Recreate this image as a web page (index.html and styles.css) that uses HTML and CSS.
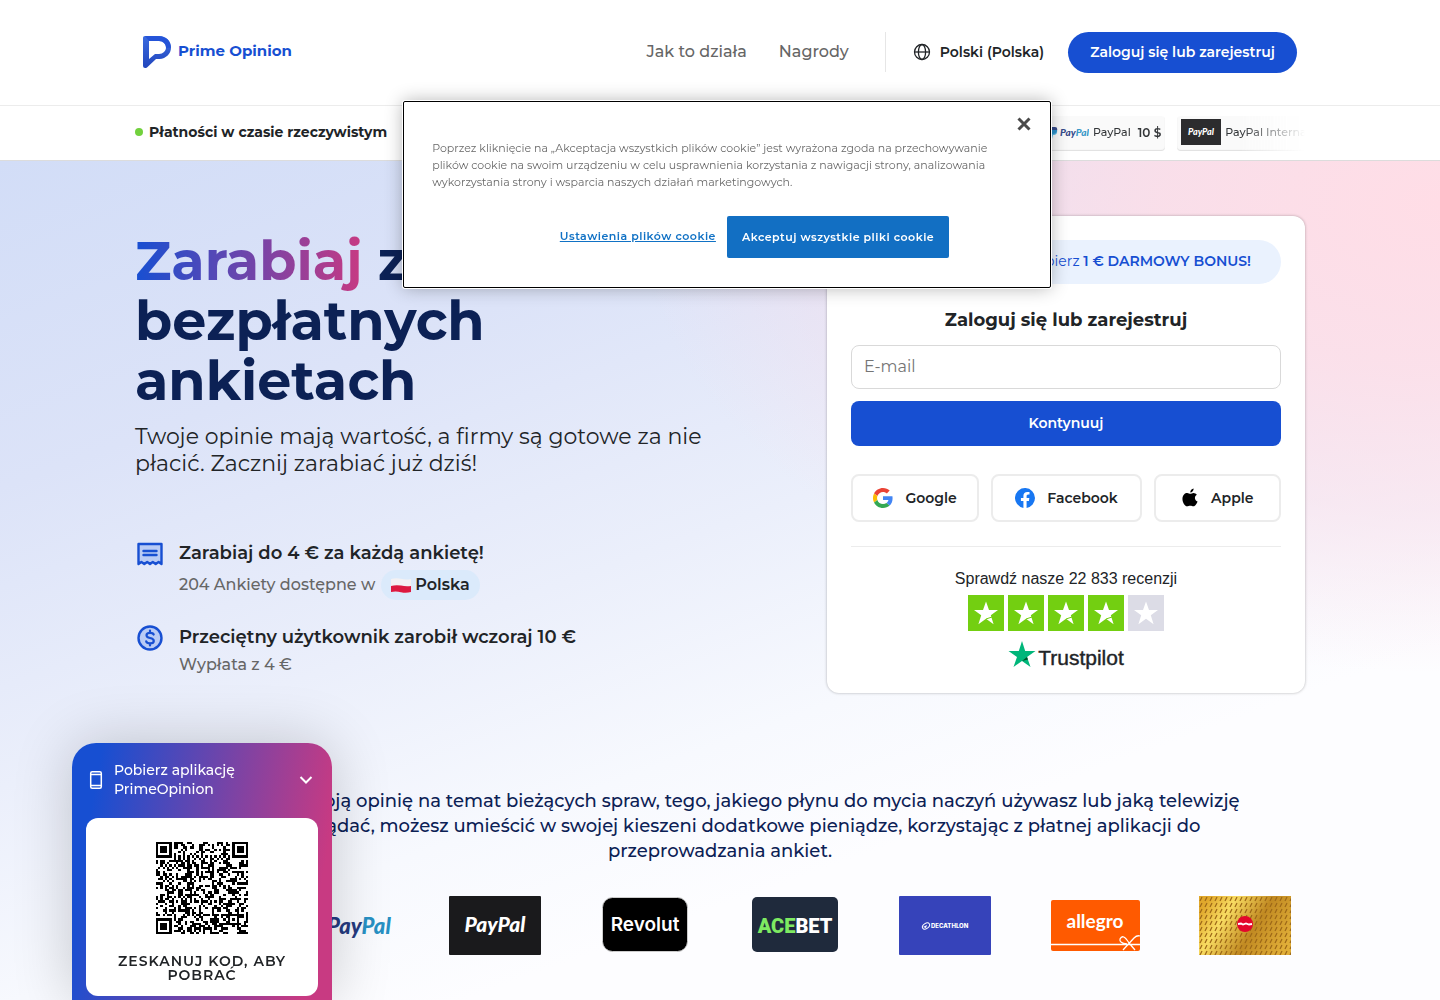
FILE: index.html
```html
<!DOCTYPE html>
<html lang="pl">
<head>
<meta charset="utf-8">
<meta name="viewport" content="width=device-width, initial-scale=1">
<title>Prime Opinion</title>
<link rel="stylesheet" href="styles.css">
</head>
<body>
<header class="site-header">
  <div class="container header-row">
    <a class="brand" href="#">
      <svg width="28" height="34" viewBox="0 0 28 34" aria-hidden="true">
        <defs><linearGradient id="brandFill" x1="0" y1="0" x2="0" y2="1"><stop offset="0" stop-color="#3a6be0"/><stop offset="1" stop-color="#2246bd"/></linearGradient></defs>
        <path d="M2 1H16C23 1 28 6 28 12.500C28 19 23 23.500 16.500 24H13L4 32.400C2 33.600 0 33 0 30.500V3C0 1.800.8 1 2 1Z" fill="url(#brandFill)"/>
        <path d="M6 6H16C20 6 23 9 23 12.500C23 16 20 19 16 19H12L6 24Z" fill="#fff"/>
        <path d="M2 1H16C23 1 28 6 28 12.500L23 13C23 9 20 6 16 6H6Z" fill="#1d4bd6" opacity=".7"/>
      </svg>
      <span>Prime Opinion</span>
    </a>
    <nav class="main-nav">
      <a href="#">Jak to działa</a>
      <a href="#">Nagrody</a>
    </nav>
    <button class="language" type="button">
      <svg width="18" height="18" viewBox="0 0 18 18" fill="none" stroke="currentColor" stroke-width="1.300" aria-hidden="true"><circle cx="9" cy="9" r="7.500"/><ellipse cx="9" cy="9" rx="3.600" ry="7.500"/><path d="M1.500 9H16.500"/></svg>
      <span>Polski (Polska)</span>
    </button>
    <button class="login" type="button">Zaloguj się lub zarejestruj</button>
  </div>
</header>

<section class="ticker">
  <div class="container ticker-row">
    <p class="ticker-label">Płatności w czasie rzeczywistym</p>
    <ul class="payouts">
      <li>
        <svg width="40" height="26" viewBox="0 0 40 26" aria-hidden="true"><path d="M1 8H6Q9 8 8 12Q7 15 3 15L2 18H-1Z" fill="#253b80"/><path d="M3 11H8Q9 16 4 16L3 20H0Z" fill="#179bd7" opacity=".8"/><text class="pp-text" x="11" y="17" font-size="10"><tspan fill="#253b80">Pay</tspan><tspan fill="#2790c3">Pal</tspan></text></svg>
        <span>PayPal</span><strong>10 $</strong>
      </li>
      <li>
        <svg width="40" height="26" viewBox="0 0 40 26" aria-hidden="true"><rect width="40" height="26" fill="#1a1a1c"/><text class="pp-text" x="20" y="16" font-size="9" text-anchor="middle" fill="#fff">PayPal</text></svg>
        <span>PayPal International</span><strong>10 $</strong>
      </li>
    </ul>
  </div>
</section>

<main class="page">
  <div class="container hero">
    <div class="pitch">
      <h1><span class="accent">Zarabiaj</span> z bezpłatnych ankietach</h1>
      <p class="lead">Twoje opinie mają wartość, a firmy są gotowe za nie płacić. Zacznij zarabiać już dziś!</p>
      <ul class="benefits">
        <li>
          <svg width="30" height="30" viewBox="0 0 30 30" aria-hidden="true"><path d="M3.500 6H26.500V26L23.600 24L20.700 26L17.800 24L15 26L12.200 24L9.300 26L6.400 24L3.500 26Z" fill="#b9cbf5" stroke="#174fd2" stroke-width="2.400" stroke-linejoin="round"/><path d="M8.500 13H21.500M8.500 17H21.500" stroke="#174fd2" stroke-width="2.400" stroke-linecap="round"/></svg>
          <div>
            <h2>Zarabiaj do 4 € za każdą ankietę!</h2>
            <p class="available">204 Ankiety dostępne w <span class="country"><svg width="20" height="15" viewBox="0 0 20 15" aria-hidden="true"><path d="M0 1Q5 -.5 10 .8T20 1V14Q15 15.500 10 14.200T0 14Z" fill="#f3f1f3"/><path d="M0 8Q5 6.500 10 7.600T20 8V14Q15 15.500 10 14.200T0 14Z" fill="#dc1940"/></svg>Polska</span></p>
          </div>
        </li>
        <li>
          <svg width="30" height="30" viewBox="0 0 30 30" aria-hidden="true"><circle cx="15" cy="16" r="11.500" fill="#b9cbf5" stroke="#174fd2" stroke-width="2.400"/><path d="M18.700 12.500Q18 10.800 15 10.800Q11.500 10.800 11.500 13.300Q11.500 15.400 15 16Q18.800 16.600 18.800 19Q18.800 21.400 15 21.400Q11.800 21.400 11.200 19.400M15 8.500V10.800M15 21.400V23.500" fill="none" stroke="#174fd2" stroke-width="2.200" stroke-linecap="round"/></svg>
          <div>
            <h2>Przeciętny użytkownik zarobił wczoraj 10 €</h2>
            <p>Wypłata z 4 €</p>
          </div>
        </li>
      </ul>
    </div>

    <form class="signup">
      <p class="bonus">Zarejestruj się i odbierz <b>1 € DARMOWY BONUS!</b></p>
      <h2><label for="email">Zaloguj się lub zarejestruj</label></h2>
      <input id="email" type="email" placeholder="E-mail">
      <button class="continue" type="button">Kontynuuj</button>
      <div class="providers">
        <button type="button"><svg width="20" height="20" viewBox="0 0 48 48" aria-hidden="true"><path fill="#EA4335" d="M24 9.500c3.540 0 6.710 1.220 9.210 3.600l6.850-6.850C35.900 2.380 30.470 0 24 0 14.620 0 6.510 5.380 2.560 13.220l7.980 6.190C12.430 13.720 17.740 9.500 24 9.500z"/><path fill="#4285F4" d="M46.980 24.550c0-1.570-.15-3.090-.38-4.550H24v9.020h12.940c-.58 2.960-2.260 5.480-4.780 7.180l7.730 6c4.510-4.180 7.090-10.360 7.090-17.650z"/><path fill="#FBBC05" d="M10.530 28.590a14.500 14.500 0 0 1 0-9.180l-7.980-6.190a24 24 0 0 0 0 21.560z"/><path fill="#34A853" d="M24 48c6.480 0 11.930-2.130 15.890-5.810l-7.730-6c-2.150 1.450-4.920 2.300-8.160 2.300-6.260 0-11.570-4.220-13.470-9.910l-7.980 6.190C6.510 42.620 14.620 48 24 48z"/></svg>Google</button>
        <button type="button"><svg width="20" height="20" viewBox="0 0 24 24" aria-hidden="true"><path fill="#1877f2" d="M24 12a12 12 0 1 0-13.900 11.900v-8.400H7.100V12h3V9.400c0-3 1.800-4.700 4.600-4.700 1.300 0 2.700.2 2.700.2v3h-1.500c-1.500 0-2 .9-2 1.900V12h3.300l-.5 3.500h-2.800v8.400A12 12 0 0 0 24 12z"/></svg>Facebook</button>
        <button type="button"><svg width="18" height="20" viewBox="0 0 18 22" aria-hidden="true"><path d="M12.800 5.500c1.500 0 2.900.8 3.700 2-3.100 1.700-2.600 6.200.8 7.400-.7 1.800-2.400 5.300-4.500 5.300-1.400 0-1.800-.8-3.500-.8s-2.200.8-3.500.8C3.200 20.300.5 15.700.7 11.600.9 7.700 3.400 5.500 5.900 5.500c1.400 0 2.500.9 3.500.9s2-.9 3.400-.9zM9.300 5C9.200 2.600 11 .7 13 .5 13.200 2.900 11.300 5 9.300 5z"/></svg>Apple</button>
      </div>
      <hr>
      <a class="reviews" href="#">
        <span>Sprawdź nasze 22 833 recenzji</span>
        <svg width="196" height="36" viewBox="0 0 196 36" aria-hidden="true">
          <defs><path id="star" d="M18 6.500L21 15H30L22.800 20.300L25.600 29.200L18 23.700L10.400 29.200L13.200 20.300L6 15H15Z"/></defs>
          <g fill="#73cf11"><rect width="36" height="36"/><rect x="40" width="36" height="36"/><rect x="80" width="36" height="36"/><rect x="120" width="36" height="36"/></g><rect x="160" width="36" height="36" fill="#dcdce6"/>
          <g fill="#fff"><use href="#star"/><use href="#star" x="40"/><use href="#star" x="80"/><use href="#star" x="120"/><use href="#star" x="160"/></g>
          <g fill="none" stroke="#73cf11"><path id="cut" d="M18 24L24 22"/><use href="#cut" x="40"/><use href="#cut" x="80"/><use href="#cut" x="120"/></g>
        </svg>
        <span class="trustpilot"><svg width="28" height="28" viewBox="0 0 28 28" aria-hidden="true"><path d="M14 0L17.200 10H27.500L19 16L22.500 26L14 20L5.500 26L9 16L.5 10H10.800Z" fill="#00b67a"/><path d="M19 16L20 18.500L14 20Z" fill="#005128"/></svg>Trustpilot</span>
      </a>
    </form>
  </div>

  <div class="container partners">
    <p>Wyrażając swoją opinię na temat bieżących spraw, tego, jakiego płynu do mycia naczyń używasz lub jaką telewizję<br>lubisz oglądać, możesz umieścić w swojej kieszeni dodatkowe pieniądze, korzystając z płatnej aplikacji do<br>przeprowadzania ankiet.</p>
    <ul class="cards">
      <li><svg width="92" height="59" viewBox="0 0 92 59" role="img" aria-label="Visa"><rect width="92" height="59" rx="4" fill="#1a3c8c"/></svg></li>
      <li><svg width="96" height="59" viewBox="0 0 96 59" role="img" aria-label="PayPal"><path d="M4 20H16Q23 20 21 28Q18 34 11 34L9 42H0Z" fill="#253b80"/><text class="pp-text" x="28" y="38" font-size="22"><tspan fill="#253b80">Pay</tspan><tspan fill="#2790c3">Pal</tspan></text></svg></li>
      <li><svg width="92" height="59" viewBox="0 0 92 59" role="img" aria-label="PayPal"><rect width="92" height="59" rx="1" fill="#1a1a1c"/><text class="pp-text" x="46" y="36" font-size="21" text-anchor="middle" fill="#fff">PayPal</text></svg></li>
      <li><svg width="92" height="59" viewBox="0 0 92 59" role="img" aria-label="Revolut"><rect x="3.500" y="1.500" width="85" height="54" rx="10" fill="#000" stroke="#ccc" stroke-width="1"/><text class="logo-text revolut" x="46" y="35" font-size="19" text-anchor="middle" fill="#fff">Revolut</text></svg></li>
      <li><svg width="92" height="59" viewBox="0 0 92 59" role="img" aria-label="Acebet"><rect x="3" y="1" width="86" height="55" rx="5" fill="#1f2a3c"/><text class="ace-text" x="46" y="37" font-size="20" text-anchor="middle" fill="#fff"><tspan fill="#7eea62">ACE</tspan>BET</text></svg></li>
      <li><svg width="92" height="59" viewBox="0 0 92 59" role="img" aria-label="Decathlon"><rect width="92" height="59" rx="1" fill="#3643ba"/><ellipse cx="27" cy="30" rx="4" ry="2.500" transform="rotate(-35 27 30)" fill="none" stroke="#fff"/><path d="M24 31L28 29L27 32Z" fill="#fff"/><text class="logo-text" x="32" y="32" font-size="6" fill="#fff">DECATHLON</text></svg></li>
      <li><svg width="92" height="59" viewBox="0 0 92 59" role="img" aria-label="Allegro"><rect x="2" y="4" width="89" height="51" rx="2" fill="#ff5a00"/><text class="allegro-text" x="46" y="32" font-size="19" text-anchor="middle" fill="#fff">allegro</text><path d="M2 48.500H91M78 48Q70 47 71 43Q74 37 80 47L86 54M74 54L85 42Q88 39 91 40" fill="none" stroke="#fff" stroke-width="1.300"/></svg></li>
      <li><svg width="92" height="59" viewBox="0 0 92 59" role="img" aria-label="Karta podarunkowa"><defs><linearGradient id="gold" x1="0" y1=".3" x2="1" y2=".7"><stop offset="0" stop-color="#e0a82c"/><stop offset=".25" stop-color="#f8dc62"/><stop offset=".6" stop-color="#c18a22"/><stop offset="1" stop-color="#e0ae38"/></linearGradient><pattern id="dash" width="5" height="6" patternUnits="userSpaceOnUse"><path d="M1 5L3 1" stroke="#9c6717" stroke-width="1.200"/></pattern></defs><rect width="92" height="59" fill="url(#gold)"/><rect width="92" height="59" fill="url(#dash)"/><circle cx="46" cy="28" r="8" fill="#e3062c"/><path d="M39 28L42 27.500L44 28.500L47 27.500L50 28.500L53 28" fill="none" stroke="#fff" stroke-width="1.800"/></svg></li>
    </ul>
  </div>
</main>

<aside class="app-promo">
  <button class="app-toggle" type="button" aria-expanded="true">
    <svg width="14" height="20" viewBox="0 0 14 20" fill="none" stroke="#fff" stroke-width="1.500" aria-hidden="true"><rect x="1.700" y="1.700" width="10.600" height="16.600" rx="1.500"/><path d="M2 4.500H12M2 15.500H12"/></svg>
    <span>Pobierz aplikację PrimeOpinion</span>
    <svg width="14" height="10" viewBox="0 0 14 10" fill="none" stroke="#fff" stroke-width="2" aria-hidden="true"><path d="M1.500 2L7 7.500L12.500 2"/></svg>
  </button>
  <div class="qr-card">
    <svg id="qr" width="92" height="92" viewBox="0 0 41 41" shape-rendering="crispEdges" role="img" aria-label="Kod QR"><path d=""/></svg>
    <p>Zeskanuj kod, aby pobrać</p>
  </div>
</aside>

<div class="cookies" role="dialog" aria-label="Pliki cookie">
  <button class="close" type="button" aria-label="Zamknij"><svg width="14" height="14" viewBox="0 0 14 14" stroke="#4a4a4a" stroke-width="3" aria-hidden="true"><path d="M1.500 1.500L12.500 12.500M12.500 1.500L1.500 12.500"/></svg></button>
  <p>Poprzez kliknięcie na „Akceptacja wszystkich plików cookie” jest wyrażona zgoda na przechowywanie plików cookie na swoim urządzeniu w celu usprawnienia korzystania z nawigacji strony, analizowania wykorzystania strony i wsparcia naszych działań marketingowych.</p>
  <div class="cookie-actions">
    <button class="settings" type="button">Ustawienia plików cookie</button>
    <button class="accept" type="button">Akceptuj wszystkie pliki cookie</button>
  </div>
</div>
<script src="qr.js"></script>
</body>
</html>
```
FILE: styles.css
```css
* { box-sizing: border-box; }
body {
  margin: 0;
  color: #212427;
  font-family: Montserrat, Inter, sans-serif;
  font-size: 16px;
  background: #fff;
  overflow-x: hidden;
}
h1, h2, p, ul { margin: 0; padding: 0; }
ul { list-style: none; }
a { color: inherit; text-decoration: none; }
button { font: inherit; color: inherit; background: none; border: 0; padding: 0; cursor: pointer; }
svg { flex: none; display: block; }
.container { width: 100%; max-width: 1170px; margin: 0 auto; }

.site-header { border-bottom: 1px solid #ececec; }
.header-row { display: flex; align-items: center; height: 105px; padding: 0 8px 1px; }
.brand { display: flex; align-items: center; gap: 7px; margin-right: auto; color: #174fd2; font-size: 15px; line-height: 20px; font-weight: 700; }
.brand span { padding-bottom: 2px; }
.main-nav { display: flex; align-items: center; gap: 32px; height: 40px; padding: 0 36px 2px 0; border-right: 1px solid #e6e6e6; color: #666; font-weight: 500; }
.language { display: flex; align-items: center; gap: 9px; margin: 0 24px 0 27px; font-size: 14px; font-weight: 600; }
.login { height: 41px; padding: 0 22px 1px; border-radius: 21px; background: #174fd2; color: #fff; font-size: 14px; font-weight: 600; }

.ticker { border-bottom: 1px solid #dcdcdc; }
.ticker-row { display: flex; align-items: center; justify-content: space-between; height: 54px; }
.ticker-label { display: flex; align-items: center; gap: 6px; padding-bottom: 2px; font-size: 14px; font-weight: 700; }
.ticker-label::before { content: ""; width: 8px; height: 8px; border-radius: 50%; background: #72d13d; }
.payouts { display: flex; flex: 0 0 260px; gap: 12px; overflow: hidden; opacity: .92; -webkit-mask-image: linear-gradient(to left, transparent, #000 64px); mask-image: linear-gradient(to left, transparent, #000 64px); }
.payouts li { display: flex; flex: none; align-items: center; gap: 4px; height: 35px; padding: 0 4px 2px; border-radius: 4px; background: #fafafa; box-shadow: inset 0 -1px 1px #ddd; font-size: 11px; font-weight: 500; white-space: nowrap; }
.payouts strong { margin-left: 3px; font-size: 12px; font-weight: 600; }

.page {
  min-height: 839px;
  background:
    radial-gradient(ellipse 56% 56% at 100% 5%, #ffdde6, rgba(253, 221, 231, .85) 35%, rgba(248, 219, 232, .55) 65%, rgba(245, 220, 235, 0)),
    linear-gradient(160deg, #d2ddf7, #dce3f8 24%, #ebeffb 46%, #f7f9fe 62%, #fdfdff 74%);
}
.hero { display: flex; justify-content: space-between; align-items: flex-start; padding-top: 55px; }
.pitch { flex: 0 1 580px; padding-top: 15px; }
h1 { color: #0c2155; font-size: 54px; line-height: 60px; font-weight: 700; }
.accent { background: linear-gradient(90deg, #174fd2, #c83a82); -webkit-background-clip: text; background-clip: text; color: transparent; }
.lead { margin-top: 12px; font-size: 22px; line-height: 27px; }
.benefits { display: grid; gap: 20px; margin-top: 61px; }
.benefits li { display: flex; gap: 14px; }
.benefits h2 { font-size: 18px; line-height: 30px; font-weight: 600; }
.benefits p { color: #666; line-height: 26px; font-weight: 500; }
.benefits .available { display: flex; align-items: center; gap: 6px; height: 34px; }
.country { display: inline-flex; align-items: center; gap: 4px; height: 30px; padding: 0 10px; border-radius: 15px; background: #dbeafb; color: #212427; font-weight: 600; }

.signup { flex: 0 0 478px; padding: 24px 24px 20px; border-radius: 12px; background: #fff; box-shadow: 0 0 3px rgba(0, 0, 0, .3); text-align: center; }
.bonus { height: 44px; padding: 0 30px; border-radius: 22px; background: #eaf2fe; color: #174fd2; font-size: 14px; line-height: 42px; text-align: right; }
.bonus b { font-weight: 600; }
.signup h2 { margin: 24px 0 13px; font-size: 18px; line-height: 24px; font-weight: 700; }
.signup input { display: block; width: 100%; height: 44px; padding: 0 12px 2px; border: 1px solid #d9d9d9; border-radius: 8px; font: inherit; }
.signup input::placeholder { color: #757575; opacity: 1; }
.continue { display: block; width: 100%; height: 45px; margin: 12px 0 28px; padding-bottom: 1px; border-radius: 8px; background: #174fd2; color: #fff; font-size: 14px; font-weight: 600; }
.providers { display: grid; grid-template-columns: 128fr 150fr 127fr; gap: 12px; }
.providers button { display: flex; align-items: center; justify-content: center; gap: 12px; height: 48px; border: 2px solid #ececec; border-radius: 8px; font-size: 14px; font-weight: 600; }
.signup hr { margin: 24px 0 22px; border: 0; border-top: 1px solid #ececec; }
.reviews { display: grid; justify-items: center; gap: 6px; font-family: "Liberation Sans", Arial, sans-serif; font-size: 16px; line-height: 20px; }
.trustpilot { display: flex; align-items: flex-start; gap: 2px; padding-top: 4px; font-size: 21px; line-height: 34px; height: 36px; -webkit-text-stroke: .4px #212427; }

.partners { padding-top: 96px; text-align: center; }
.partners p { color: #0c2155; font-size: 18px; line-height: 25px; font-weight: 500; }
.cards { display: flex; justify-content: space-between; margin-top: 32px; padding: 0 14px; }
.cards li { width: 92px; }
.pp-text { font-family: Lato, sans-serif; font-weight: 900; font-style: italic; }
.logo-text { font-family: Inter, sans-serif; font-weight: 800; }
.revolut { font-weight: 600; }
.ace-text { font-family: Roboto, sans-serif; font-weight: 900; }
.allegro-text { font-family: Lato, sans-serif; font-weight: 700; }

.app-promo { position: fixed; left: 5%; bottom: 0; width: 260px; padding: 0 14px 4px; border-radius: 24px 24px 0 0; background: linear-gradient(100deg, #174fd2 10%, #c83a82 90%); box-shadow: 0 0 60px rgba(0, 0, 0, .2); }
.app-toggle { display: flex; align-items: center; gap: 11px; width: 100%; height: 75px; padding: 0 5px 2px 3px; color: #fff; font-size: 14px; line-height: 19px; font-weight: 500; text-align: left; }
.app-toggle span { flex: 1; padding-right: 40px; }
.qr-card { display: flex; flex-direction: column; align-items: center; gap: 20px; height: 178px; padding: 24px 20px 0; border-radius: 12px; background: #fff; text-align: center; }
.qr-card p { font-size: 14px; line-height: 14px; font-weight: 600; text-transform: uppercase; letter-spacing: 1px; }

.cookies { position: fixed; left: 28%; top: 101px; width: 45%; padding: 38px 28px 29px; border: 1px solid #000; border-radius: 2px; background: #fff; box-shadow: 0 0 0 1px #fff, 0 0 18px rgba(0, 0, 0, .3); }
.cookies p { color: #696969; font-size: 11px; line-height: 17px; }
.close { position: absolute; top: 15px; right: 19px; }
.cookie-actions { display: flex; align-items: center; justify-content: flex-end; gap: 11px; margin-top: 25px; padding-right: 73px; font-size: 11px; font-weight: 600; letter-spacing: .5px; }
.settings { padding-bottom: 2px; color: #1172c5; text-decoration: underline; letter-spacing: inherit; }
.accept { height: 42px; padding: 0 15px 1px; border-radius: 2px; background: #126fc3; color: #fff; letter-spacing: inherit; }
```
FILE: qr.js
```js
// Builds the QR artwork on a 41-module grid.
const size = 41;
let seed = 20731;
const random = () => (seed = (seed * 16807) % 2147483647) / 2147483647;
const square = (x, y, cx, cy) => Math.max(Math.abs(x - cx), Math.abs(y - cy));

function isDark(x, y) {
  const noise = random() < 0.5;
  for (const [cx, cy] of [[3, 3], [size - 4, 3], [3, size - 4]]) {
    const d = square(x, y, cx, cy);
    if (d <= 4) return d < 2 || d === 3;
  }
  const a = square(x, y, 34, 34);
  if (a <= 2) return a !== 1;
  if (x === 6 || y === 6) return (x + y) % 2 === 0;
  return noise;
}

let d = "";
for (let y = 0; y < size; y++)
  for (let x = 0; x < size; x++)
    if (isDark(x, y)) d += `M${x} ${y}h1v1h-1z`;
document.querySelector("#qr path").setAttribute("d", d);
```
